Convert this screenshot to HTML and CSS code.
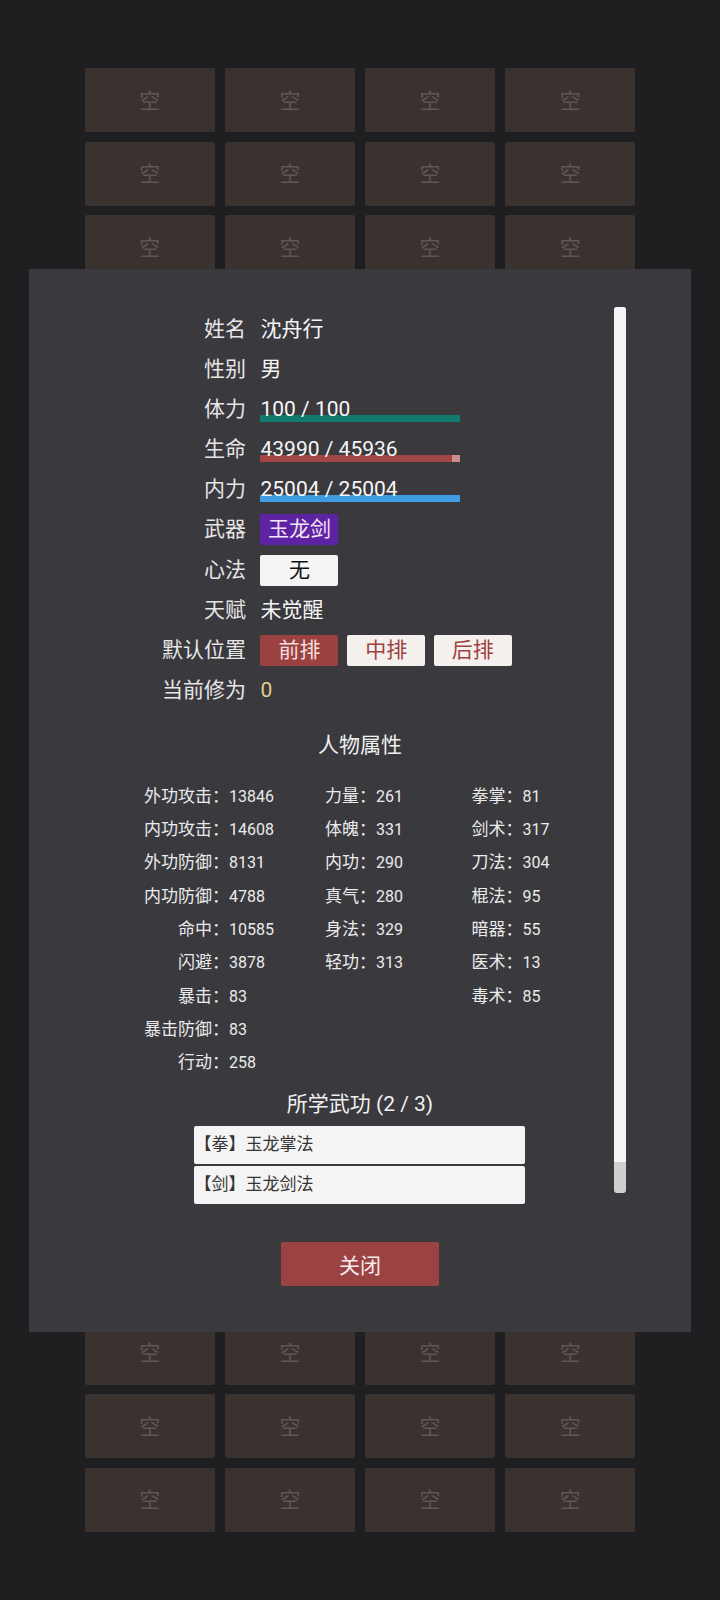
FILE: index.html
```html
<!DOCTYPE html>
<html lang="zh-CN">
<head>
<meta charset="utf-8">
<title>角色详情</title>
<link rel="stylesheet" href="styles.css">
</head>
<body>
<main class="bag">
  <div class="slot">空</div><div class="slot">空</div><div class="slot">空</div><div class="slot">空</div>
  <div class="slot">空</div><div class="slot">空</div><div class="slot">空</div><div class="slot">空</div>
  <div class="slot">空</div><div class="slot">空</div><div class="slot">空</div><div class="slot">空</div>
  <div class="slot">空</div><div class="slot">空</div><div class="slot">空</div><div class="slot">空</div>
  <div class="slot">空</div><div class="slot">空</div><div class="slot">空</div><div class="slot">空</div>
  <div class="slot">空</div><div class="slot">空</div><div class="slot">空</div><div class="slot">空</div>
  <div class="slot">空</div><div class="slot">空</div><div class="slot">空</div><div class="slot">空</div>
  <div class="slot">空</div><div class="slot">空</div><div class="slot">空</div><div class="slot">空</div>
  <div class="slot">空</div><div class="slot">空</div><div class="slot">空</div><div class="slot">空</div>
  <div class="slot">空</div><div class="slot">空</div><div class="slot">空</div><div class="slot">空</div>
  <div class="slot">空</div><div class="slot">空</div><div class="slot">空</div><div class="slot">空</div>
  <div class="slot">空</div><div class="slot">空</div><div class="slot">空</div><div class="slot">空</div>
  <div class="slot">空</div><div class="slot">空</div><div class="slot">空</div><div class="slot">空</div>
  <div class="slot">空</div><div class="slot">空</div><div class="slot">空</div><div class="slot">空</div>
  <div class="slot">空</div><div class="slot">空</div><div class="slot">空</div><div class="slot">空</div>
  <div class="slot">空</div><div class="slot">空</div><div class="slot">空</div><div class="slot">空</div>
  <div class="slot">空</div><div class="slot">空</div><div class="slot">空</div><div class="slot">空</div>
  <div class="slot">空</div><div class="slot">空</div><div class="slot">空</div><div class="slot">空</div>
  <div class="slot">空</div><div class="slot">空</div><div class="slot">空</div><div class="slot">空</div>
  <div class="slot">空</div><div class="slot">空</div><div class="slot">空</div><div class="slot">空</div>
</main>

<div class="overlay">
  <section class="modal">
    <div class="info">
      <div class="info-label">姓名</div><div class="info-value">沈舟行</div>
      <div class="info-label">性别</div><div class="info-value">男</div>
      <div class="info-label">体力</div>
      <div class="meter">
        <div class="meter-track"><div class="meter-fill fill-stamina" style="width: 100%"></div></div>
        <div class="meter-text">100 / 100</div>
      </div>
      <div class="info-label">生命</div>
      <div class="meter">
        <div class="meter-track track-health"><div class="meter-fill fill-health" style="width: 95.76%"></div></div>
        <div class="meter-text">43990 / 45936</div>
      </div>
      <div class="info-label">内力</div>
      <div class="meter">
        <div class="meter-track"><div class="meter-fill fill-mana" style="width: 100%"></div></div>
        <div class="meter-text">25004 / 25004</div>
      </div>
      <div class="info-label">武器</div><div class="info-value"><span class="tag tag-weapon">玉龙剑</span></div>
      <div class="info-label">心法</div><div class="info-value"><span class="tag tag-empty">无</span></div>
      <div class="info-label">天赋</div><div class="info-value">未觉醒</div>
      <div class="info-label">默认位置</div>
      <div class="info-value positions">
        <span class="tag tag-pos active">前排</span>
        <span class="tag tag-pos">中排</span>
        <span class="tag tag-pos">后排</span>
      </div>
      <div class="info-label">当前修为</div><div class="info-value cultivation">0</div>
    </div>

    <h2 class="section-title title-attrs">人物属性</h2>
    <div class="stats">
      <dl class="stat-col stat-col-wide">
        <dt>外功攻击：</dt><dd>13846</dd>
        <dt>内功攻击：</dt><dd>14608</dd>
        <dt>外功防御：</dt><dd>8131</dd>
        <dt>内功防御：</dt><dd>4788</dd>
        <dt>命中：</dt><dd>10585</dd>
        <dt>闪避：</dt><dd>3878</dd>
        <dt>暴击：</dt><dd>83</dd>
        <dt>暴击防御：</dt><dd>83</dd>
        <dt>行动：</dt><dd>258</dd>
      </dl>
      <dl class="stat-col">
        <dt>力量：</dt><dd>261</dd>
        <dt>体魄：</dt><dd>331</dd>
        <dt>内功：</dt><dd>290</dd>
        <dt>真气：</dt><dd>280</dd>
        <dt>身法：</dt><dd>329</dd>
        <dt>轻功：</dt><dd>313</dd>
      </dl>
      <dl class="stat-col stat-col-last">
        <dt>拳掌：</dt><dd>81</dd>
        <dt>剑术：</dt><dd>317</dd>
        <dt>刀法：</dt><dd>304</dd>
        <dt>棍法：</dt><dd>95</dd>
        <dt>暗器：</dt><dd>55</dd>
        <dt>医术：</dt><dd>13</dd>
        <dt>毒术：</dt><dd>85</dd>
      </dl>
    </div>

    <h2 class="section-title title-skills">所学武功 (2 / 3)</h2>
    <ul class="skills">
      <li>【拳】玉龙掌法</li>
      <li>【剑】玉龙剑法</li>
    </ul>

    <button class="btn-close" type="button">关闭</button>

    <div class="scrollbar"><div class="scrollbar-thumb"></div></div>
  </section>
</div>
</body>
</html>
```

FILE: styles.css
```css
* {
  box-sizing: border-box;
  margin: 0;
  padding: 0;
}

html, body {
  height: 100%;
}

body {
  background: #1f1f21;
  font-family: Roboto, "Noto Sans CJK SC", sans-serif;
  color: #f3f3f3;
  display: flex;
  align-items: center;
  justify-content: center;
  overflow: hidden;
}

/* inventory grid behind the dialog */
.bag {
  display: grid;
  grid-template-columns: repeat(4, 130.6px);
  grid-auto-rows: 64px;
  column-gap: 9.5px;
  row-gap: 9.68px;
}

.slot {
  background: #39322f;
  border-radius: 2px;
  display: flex;
  align-items: center;
  justify-content: center;
  color: #5e5652;
  font-family: "Noto Sans CJK SC", sans-serif;
  font-size: 21px;
  line-height: 1;
  padding-bottom: 2px;
}

/* dialog */
.overlay {
  position: fixed;
  inset: 0;
  display: flex;
  align-items: center;
  justify-content: center;
}

.modal {
  position: relative;
  width: 92%;
  background: #3a393e;
  padding: 45.5px 0;
}

.info {
  display: grid;
  grid-template-columns: 217.2px auto;
  grid-auto-rows: 31px;
  column-gap: 14.5px;
  row-gap: 9.1px;
  align-items: center;
  font-size: 21px;
  line-height: 31px;
}

.info-label {
  text-align: right;
  color: #e6e6e6;
}

.info-value {
  color: #f5f5f5;
}

.meter {
  display: grid;
  width: 200px;
  height: 31px;
}

.meter > * {
  grid-area: 1 / 1;
}

.meter-track {
  align-self: end;
  height: 7.5px;
  margin-bottom: 3px;
  background: transparent;
}

.meter-fill {
  height: 100%;
}

.fill-stamina { background: #0f7a6d; }
.track-health { background: #cf8d8d; }
.fill-health { background: #a14545; }
.fill-mana { background: #3d9de0; }

.meter-text {
  color: #f7f7f7;
  line-height: 31px;
}

.tag {
  display: flex;
  align-items: center;
  justify-content: center;
  width: 78px;
  height: 31px;
  border-radius: 2px;
  line-height: 31px;
}

.info-value > .tag {
  display: inline-flex;
  vertical-align: top;
}

.tag-weapon {
  background: #5d23a3;
  color: #f3e4f6;
}

.tag-empty {
  background: #f5f5f5;
  color: #111;
}

.positions {
  display: flex;
  gap: 8.7px;
}

.tag-pos {
  background: #f4f0ed;
  color: #9c4242;
}

.tag-pos.active {
  background: #9c4141;
  color: #f6dede;
}

.cultivation {
  color: #e2ce8c;
}

.section-title {
  text-align: center;
  font-size: 21px;
  font-weight: normal;
  line-height: 31px;
  color: #f0f0f0;
}

.title-attrs {
  margin-top: 24px;
}

.title-skills {
  margin-top: 11.5px;
}

/* attribute table: three columns of label / value pairs */
.stats {
  display: flex;
  margin-top: 16.8px;
  margin-left: 115.2px;
  color: #ebebeb;
}

.stat-col {
  display: grid;
  grid-template-columns: 51.5px 95.2px;
  grid-auto-rows: 33.35px;
  align-items: baseline;
}

.stat-col-wide {
  grid-template-columns: 85px 95.5px;
}

.stat-col-last {
  grid-template-columns: 51.3px auto;
}

.stat-col dt {
  text-align: right;
  font-family: "Noto Sans CJK SC", sans-serif;
  font-size: 17px;
  line-height: 33.35px;
  white-space: nowrap;
}

.stat-col dd {
  font-size: 16px;
  line-height: 33.35px;
}

/* learned skills */
.skills {
  list-style: none;
  width: 331px;
  margin: 6.2px auto 0;
  display: flex;
  flex-direction: column;
  gap: 2.4px;
}

.skills li {
  height: 37.6px;
  line-height: 37.6px;
  background: #f4f4f4;
  color: #333;
  border-radius: 2px;
  font-size: 17px;
}

.btn-close {
  display: block;
  width: 158px;
  height: 44px;
  margin: 38px auto 0;
  border: none;
  border-radius: 2px;
  background: #9b4343;
  color: #f7ecec;
  font-family: Roboto, "Noto Sans CJK SC", sans-serif;
  font-size: 21px;
}

/* scroll indicator for the dialog body */
.scrollbar {
  position: absolute;
  top: 38px;
  right: 65.5px;
  width: 11.5px;
  height: 886px;
  border-radius: 3px;
  background: #cfcfcf;
  overflow: hidden;
}

.scrollbar-thumb {
  height: 855px;
  background: #f4f4f4;
}
```
